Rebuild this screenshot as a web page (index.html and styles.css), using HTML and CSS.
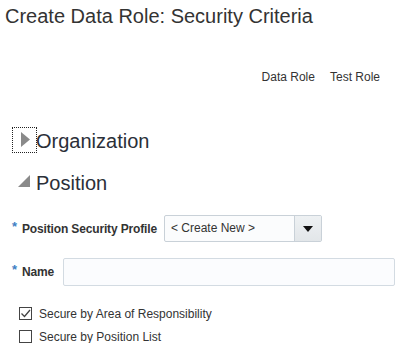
FILE: index.html
```html
<!DOCTYPE html>
<html lang="en">
<head>
    <meta charset="UTF-8">
    <title>Create Data Role: Security Criteria</title>
    <link rel="stylesheet" href="styles.css">
</head>
<body>

<h1 class="page-title">Create Data Role: Security Criteria</h1>

<div class="role-info">
    <span>Data Role</span>
    <span>Test Role</span>
</div>

<div class="section-header">
    <span class="toggle focused">
        <svg width="25" height="26" viewBox="0 0 25 26"><polygon points="9,5 18,12.5 9,20" fill="#8a8a8a"/></svg>
    </span>
    <span class="section-title">Organization</span>
</div>

<div class="section-header section-open">
    <span class="toggle">
        <svg width="25" height="26" viewBox="0 0 25 26"><polygon points="6,18 18,18 18,6" fill="#8a8a8a"/></svg>
    </span>
    <span class="section-title">Position</span>
</div>

<div class="form-row first-row">
    <span class="required">*</span>
    <label class="field-label">Position Security Profile</label>
    <div class="select-box">
        <span class="select-value">&lt; Create New &gt;</span>
        <span class="select-button">
            <svg width="10" height="6" viewBox="0 0 10 6"><polygon points="0,0 10,0 5,6" fill="#111"/></svg>
        </span>
    </div>
</div>

<div class="form-row name-row">
    <span class="required">*</span>
    <label class="field-label">Name</label>
    <div class="text-input"></div>
</div>

<div class="check-list">
    <label class="check-row">
        <span class="check-box">
            <svg width="11" height="11" viewBox="0 0 11 11"><polyline points="1.5,5.5 4.5,8.5 10,2" fill="none" stroke="#444" stroke-width="1.3"/></svg>
        </span>
        Secure by Area of Responsibility
    </label>
    <label class="check-row">
        <span class="check-box"></span>
        Secure by Position List
    </label>
</div>

</body>
</html>
```

FILE: styles.css
```css
body {
    margin: 0;
    font-family: "Liberation Sans", Arial, sans-serif;
    color: #333;
    background: #fff;
}
.page-title {
    margin: 0;
    padding: 5px 5px 0;
    font-size: 20px;
    line-height: 23px;
    font-weight: normal;
}
.role-info {
    display: flex;
    justify-content: flex-end;
    gap: 15px;
    margin-top: 42px;
    padding-right: 31px;
    font-size: 12px;
    line-height: 14px;
}
.section-header {
    display: flex;
    align-items: flex-start;
    margin-top: 43px;
    padding-left: 12px;
}
.section-open {
    margin-top: 16px;
}
.toggle {
    display: block;
    width: 25px;
    height: 26px;
    box-sizing: border-box;
    border: 1px dotted transparent;
}
.toggle svg {
    display: block;
    margin: -1px;
}
.toggle.focused {
    border-color: #222;
}
.section-title {
    margin-top: 3px;
    margin-left: -1px;
    font-size: 20px;
    line-height: 23px;
    color: #2b2f38;
}
.form-row {
    display: flex;
    align-items: center;
    padding-left: 12px;
    font-size: 12px;
}
.first-row {
    margin-top: 20px;
}
.name-row {
    margin-top: 16px;
}
.required {
    align-self: flex-start;
    width: 10px;
    margin-top: 4px;
    color: #3f7fc4;
    font-weight: bold;
    font-size: 13px;
}
.field-label {
    font-weight: bold;
    letter-spacing: -0.15px;
    margin-right: 9px;
}
.first-row .field-label {
    margin-right: 7px;
}
.select-box {
    display: flex;
    width: 158px;
    height: 27px;
    box-sizing: border-box;
    border: 1px solid #c9d1d8;
    border-radius: 2px;
    background: #fbfcfd;
}
.select-value {
    flex: 1;
    padding-left: 6px;
    line-height: 25px;
}
.select-button {
    display: flex;
    align-items: center;
    justify-content: center;
    width: 26px;
    border-left: 1px solid #c9d1d8;
    background: linear-gradient(#eef1f3, #e2e6e9);
}
.text-input {
    width: 332px;
    height: 28px;
    box-sizing: border-box;
    border: 1px solid #d3dbe2;
    border-radius: 2px;
    background: #fbfcfe;
}
.check-list {
    display: flex;
    flex-direction: column;
    gap: 10px;
    margin-top: 21px;
    padding-left: 19px;
    font-size: 12px;
}
.check-row {
    display: flex;
    align-items: center;
    gap: 7px;
    height: 13px;
}
.check-box {
    display: flex;
    align-items: center;
    justify-content: center;
    width: 13px;
    height: 13px;
    box-sizing: border-box;
    border: 1px solid #444;
    background: #fff;
}
```
